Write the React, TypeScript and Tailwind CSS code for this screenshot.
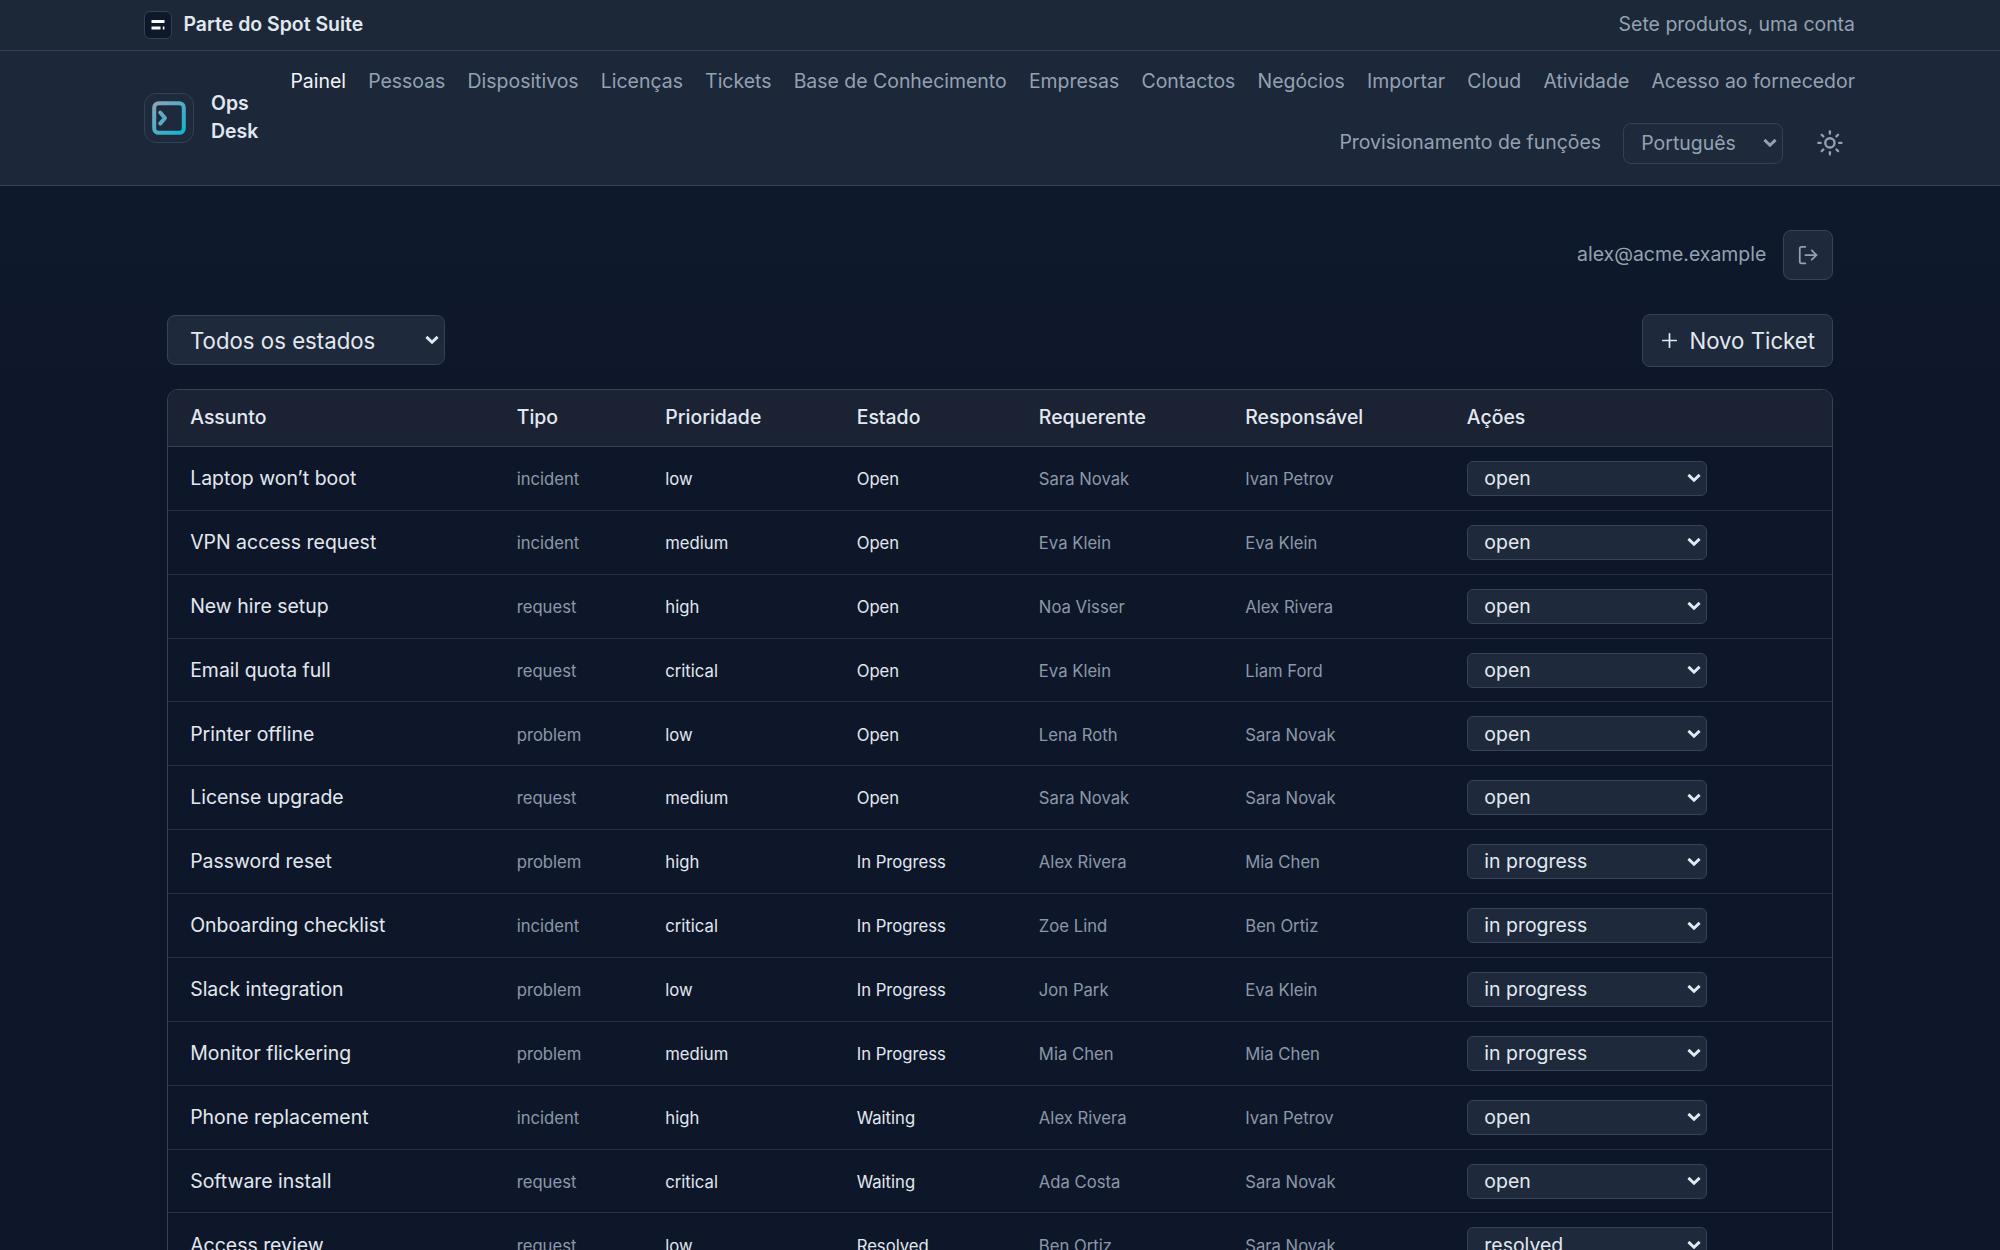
import React from "react";
import { LogOut, Plus, Sun } from "lucide-react";

const nav = [
  "Painel",
  "Pessoas",
  "Dispositivos",
  "Licenças",
  "Tickets",
  "Base de Conhecimento",
  "Empresas",
  "Contactos",
  "Negócios",
  "Importar",
  "Cloud",
  "Atividade",
  "Acesso ao fornecedor",
  "Provisionamento de funções",
];

const headers = ["Assunto", "Tipo", "Prioridade", "Estado", "Requerente", "Responsável", "Ações"];

const rows = [
  ["Laptop won’t boot", "incident", "low", "Open", "Sara Novak", "Ivan Petrov", "open"],
  ["VPN access request", "incident", "medium", "Open", "Eva Klein", "Eva Klein", "open"],
  ["New hire setup", "request", "high", "Open", "Noa Visser", "Alex Rivera", "open"],
  ["Email quota full", "request", "critical", "Open", "Eva Klein", "Liam Ford", "open"],
  ["Printer offline", "problem", "low", "Open", "Lena Roth", "Sara Novak", "open"],
  ["License upgrade", "request", "medium", "Open", "Sara Novak", "Sara Novak", "open"],
  ["Password reset", "problem", "high", "In Progress", "Alex Rivera", "Mia Chen", "in progress"],
  ["Onboarding checklist", "incident", "critical", "In Progress", "Zoe Lind", "Ben Ortiz", "in progress"],
  ["Slack integration", "problem", "low", "In Progress", "Jon Park", "Eva Klein", "in progress"],
  ["Monitor flickering", "problem", "medium", "In Progress", "Mia Chen", "Mia Chen", "in progress"],
  ["Phone replacement", "incident", "high", "Waiting", "Alex Rivera", "Ivan Petrov", "open"],
  ["Software install", "request", "critical", "Waiting", "Ada Costa", "Sara Novak", "open"],
  ["Access review", "request", "low", "Resolved", "Ben Ortiz", "Sara Novak", "resolved"],
];

const columns =
  "grid grid-cols-[326.5px_148.6px_191.4px_182.2px_206.4px_221.6px_1fr] items-center pl-[22.2px]";

function Chevron() {
  return (
    <svg
      className="pointer-events-none absolute top-1/2 right-[5px] h-[9px] w-[14px] -translate-y-1/2"
      viewBox="0 0 14 9"
      fill="none"
      stroke="currentColor"
      strokeWidth="2.9"
    >
      <path d="M1.4 1.4 7 6.8 12.6 1.4" />
    </svg>
  );
}

function Select({ value, box, field }: { value: string; box: string; field: string }) {
  return (
    <div className={"relative border " + box}>
      <select className={"block h-full w-full appearance-none bg-transparent outline-none " + field}>
        <option>{value}</option>
      </select>
      <Chevron />
    </div>
  );
}

export default function App() {
  return (
    <div className="h-[1250px] overflow-hidden bg-[#0e172a] bg-linear-to-b from-[#0e1b2e] to-[#0e1729] to-[420px] font-['Inter',sans-serif] text-[19.44px] leading-[27.8px] text-slate-200">
      <div className="h-[51px] border-b border-[#334155] bg-[#1c2838]">
        <div className="mx-auto flex h-[50px] w-[1712px] items-center justify-between pr-px">
          <div className="flex items-center gap-[11.5px]">
            <div className="flex size-[28px] items-center justify-center rounded-[6px] border border-[#334155] bg-[#0f172a]">
              <svg className="h-[12px] w-[14px]" viewBox="0 0 14 12" fill="#f8fafc">
                <path d="M0.5 1h13v3h-13zM0.5 7.5h9v3h-9zM11.8 7.5h1.6v3h-1.6z" />
              </svg>
            </div>
            <span className="pb-px font-semibold">Parte do Spot Suite</span>
          </div>
          <span className="pb-px text-[#95a1b2]">Sete produtos, uma conta</span>
        </div>
      </div>

      <header className="h-[135px] border-b border-[#334155] bg-[#1c273a]">
        <div className="mx-auto flex h-[134px] w-[1712px] items-center pr-px">
          <div className="flex w-[143px] shrink-0 items-center gap-[17px]">
            <div className="flex size-[50px] shrink-0 items-center justify-center rounded-[12px] border border-[#334155] bg-[#1e293b]">
              <svg className="size-[34px]" viewBox="0 0 34 34" fill="none" strokeWidth="4" strokeLinecap="round" strokeLinejoin="round">
                <defs>
                  <linearGradient id="mark" gradientUnits="userSpaceOnUse" x1="0" y1="0" x2="34" y2="34">
                    <stop stopColor="#94a3b8" />
                    <stop offset="1" stopColor="#06b6d4" />
                  </linearGradient>
                </defs>
                <rect x="2.2" y="2.2" width="29.6" height="29.6" rx="4.5" stroke="url(#mark)" />
                <path d="M8.2 11.5 13 17 8.2 22.6" stroke="url(#mark)" />
              </svg>
            </div>
            <span className="w-[60px] font-semibold">Ops Desk</span>
          </div>
          <nav className="flex flex-1 flex-wrap items-center justify-end gap-[22.2px] text-[#95a1b2]">
            {nav.map((item, i) => (
              <a key={item} className={i === 0 ? "text-slate-100" : ""}>
                {item}
              </a>
            ))}
            <Select value="Português" box="mt-px h-[40.5px] w-[159.5px] rounded-[8px] border-[#334155] bg-[#1e293b]" field="pl-[17px]" />
            <button className="flex size-[50px] items-center justify-center">
              <Sun size={27.8} strokeWidth={2} />
            </button>
          </nav>
        </div>
      </header>

      <main className="mx-auto w-[1666px] pt-[44.4px]">
        <div className="flex items-center justify-end gap-[16.7px] text-[#95a1b2]">
          <span className="pb-px">alex@acme.example</span>
          <button className="flex size-[50px] items-center justify-center rounded-[8px] border border-[#364356] bg-[#1e293b]">
            <LogOut size={22.2} strokeWidth={1.9} />
          </button>
        </div>

        <div className="mt-[33.6px] flex items-center justify-between text-[22.22px]">
          <Select value="Todos os estados" box="mb-px h-[50px] w-[277.5px] rounded-[8px] border-[#364356] bg-[#1e293b]" field="pl-[22px] pt-[2px]" />
          <button className="flex h-[53px] w-[191.5px] items-center justify-end gap-[8px] rounded-[8px] border border-[#364356] bg-[#1e293b] pr-[17px]">
            <Plus size={23} strokeWidth={1.8} />
            <span className="pt-px">Novo Ticket</span>
          </button>
        </div>

        <div className="mt-[22px] overflow-hidden rounded-t-[11px] border border-[#364356] bg-[#0e1729]">
          <div className={"h-[57px] border-b border-[#364356] bg-[#1a2233] font-medium " + columns}>
            {headers.map((h) => (
              <span key={h}>{h}</span>
            ))}
          </div>
          {rows.map((r) => (
            <div key={r[0]} className={"h-[63.89px] border-b border-[#263143] text-[16.67px] " + columns}>
              <span className="pt-px text-[19.44px]">{r[0]}</span>
              <span className="pt-[3px] text-[#8c98a9]">{r[1]}</span>
              <span className="pt-[3px]">{r[2]}</span>
              <span className="pt-[3px]">{r[3]}</span>
              <span className="pt-[3px] text-[#8c98a9]">{r[4]}</span>
              <span className="pt-[3px] text-[#8c98a9]">{r[5]}</span>
              <Select value={r[6]} box="h-[35px] w-[240px] rounded-[6px] border-[#364356] bg-[#1e293b]" field="pl-[16.5px] pt-px text-[19.44px]" />
            </div>
          ))}
        </div>
      </main>
    </div>
  );
}
